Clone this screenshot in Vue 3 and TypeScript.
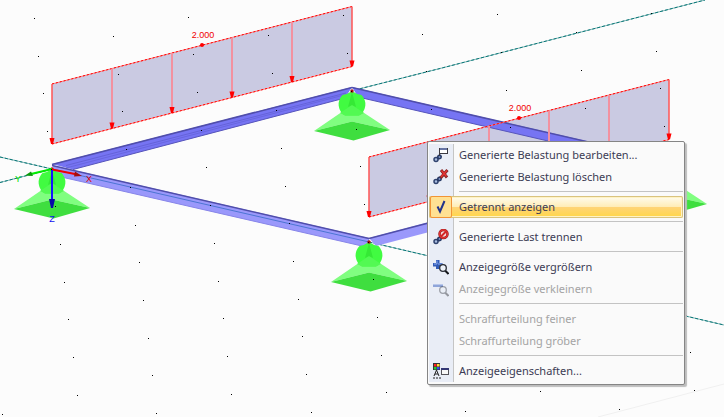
<script setup lang="ts">
import { ref } from 'vue'

type IconName = 'edit' | 'remove' | 'check' | 'split' | 'enlarge' | 'reduce' | 'display'

interface Entry {
  label: string
  icon?: IconName
  disabled?: boolean
  toggle?: boolean
}

interface Point {
  x: number
  y: number
}

const groups: Entry[][] = [
  [
    { label: 'Generierte Belastung bearbeiten...', icon: 'edit' },
    { label: 'Generierte Belastung löschen', icon: 'remove' },
  ],
  [{ label: 'Getrennt anzeigen', icon: 'check', toggle: true }],
  [{ label: 'Generierte Last trennen', icon: 'split' }],
  [
    { label: 'Anzeigegröße vergrößern', icon: 'enlarge' },
    { label: 'Anzeigegröße verkleinern', icon: 'reduce', disabled: true },
  ],
  [
    { label: 'Schraffurteilung feiner', disabled: true },
    { label: 'Schraffurteilung gröber', disabled: true },
  ],
  [{ label: 'Anzeigeeigenschaften...', icon: 'display' }],
]

const separate = ref(true)

function choose(entry: Entry): void {
  if (entry.toggle) separate.value = !separate.value
}

// Work plane grid, projected with two direction vectors
const gridDots: Point[] = []
for (let i = -3; i <= 10; i++) {
  for (let j = -7; j <= 12; j++) {
    const x = Math.floor(34.4 + i * 79.35 + j * 4.3)
    const y = Math.floor(18.3 + i * 18.25 + j * 37.7)
    if (x >= 0 && x < 724 && y >= 0 && y < 417) gridDots.push({ x, y })
  }
}

// Nodes of the frame that carry a support
const supports: Point[] = [
  { x: 352, y: 91 },
  { x: 52, y: 169 },
  { x: 669, y: 165 },
  { x: 369, y: 242 },
]

// Line loads: start of the upper edge, each 300 wide and rising by 77
const loads: Point[] = [
  { x: 52, y: 84 },
  { x: 369, y: 157 },
]
const arrows: Point[] = [0, 1, 2, 3, 4, 5].map((n) => ({ x: n * 60, y: -15.5 * n }))
</script>

<template>
  <main class="workspace">
    <svg class="scene" viewBox="0 0 724 417" preserveAspectRatio="xMinYMin slice">
      <path d="M598 417 724 384" stroke="#f0f0f0" />
      <g class="guides">
        <path d="M0 157 52 169M0 182.500 52 169M355 90 440 68.500 705 0M369 242 724 325" />
        <path class="guide-dash" d="M0 157 52 169M0 182.500 52 169M355 90 440 68.500 705 0M369 242 724 325" />
      </g>

      <g v-for="load in loads" :key="load.x" :transform="`translate(${load.x} ${load.y})`">
        <path d="M0 0 300-77.500V-18L0 60Z" fill="#cacae2" />
      </g>

      <g class="beams">
        <path d="M52 164 352 87 345 98 73 169.500Z" fill="#7674f3" />
        <path d="M66 168 344 95" stroke="#6967df" fill="none" />
        <path d="M66 165.500 346 93" stroke="#6563d8" fill="none" />
        <path class="rim" d="M52 164.500 352 87.500" />
        <path d="M73 169.500 345 98" stroke="#5755bb" />
        <path d="M352 87 669 160V169L358 97Z" fill="#7674f3" />
        <path class="rim" d="M352 87.500 669 160.500" />
        <path d="M358 97 669 169" stroke="#5755bb" />
        <path d="M52 165 369 238V246L362 246 57 176Z" fill="#9a98fb" />
        <path class="rim" d="M52 165.500 369 238.500" />
        <path d="M57 176 362 246" stroke="#8785e8" />
        <path d="M52 169 369 242" stroke="#4b75d2" />
        <path d="M369 238 669 159V169L376 246Z" fill="#9a98fb" />
        <path class="rim" d="M369 238.500 669 160" />
      </g>

      <g v-for="node in supports" :key="`${node.x}-${node.y}`" :transform="`translate(${node.x} ${node.y})`">
        <path d="M0 14-38 40 0 30.500 38 39Z" fill="#80fe80" />
        <path d="M-38 40 0 30.500 38 39 1.500 49.500Z" fill="#3fde3f" />
        <path d="M-7 24.500A13 13 0 0 1-9.500 4Q-4 3 0 0Q4 3 9.500 4A13 13 0 0 1 7 24.500Z" fill="#41fb41" />
        <path d="M0 14-12 22-7 24.500H7L12 22Z" fill="#53f953" />
        <path d="M0 1-4 16 0 14 4 16Z" fill="#35e935" />
        <circle r="1.700" fill="#a80c0c" />
      </g>

      <g class="loads">
        <g v-for="load in loads" :key="load.x" :transform="`translate(${load.x} ${load.y})`">
          <path d="M0 0 300-77.500M0 60 300-17.500" stroke="#ff7777" />
          <path d="M0 0 300-77.500M0 60 300-17.500" stroke="#f00" stroke-dasharray="2 2" />
          <g v-for="(arrow, n) in arrows" :key="n" :transform="`translate(${arrow.x} ${arrow.y})`">
            <path :class="n === 0 || n === 5 ? 'edge' : 'shaft'" d="M0 0V56" />
            <path d="M-2.500 54H2.500L1 60H-1Z" fill="#f00" />
          </g>
          <circle cx="150" cy="-39" r="2" fill="#f00" />
          <text class="value" x="151" y="-46" text-anchor="middle">2.000</text>
        </g>
      </g>

      <g class="axes">
        <path d="M52 169 31 174" stroke="#00ee00" stroke-width="2" />
        <path d="M25 175.500 31 171.500 33 176Z" fill="#0a9c0a" />
        <path d="M52 169.500 75 174" stroke="#f00000" stroke-width="2" />
        <path d="M82 176 75 171.500 74 176.500Z" fill="#a50d0d" />
        <path d="M52 170V200" stroke="#1414ff" stroke-width="2" />
        <path d="M49 199H55L53 208H51Z" fill="#0707a8" />
        <text x="18" y="182" fill="#00e000">Y</text>
        <text x="89" y="182" fill="#e00000">X</text>
        <text x="52" y="222" fill="#1010f0">Z</text>
      </g>

      <g shape-rendering="crispEdges">
        <rect v-for="dot in gridDots" :key="`${dot.x}-${dot.y}`" :x="dot.x" :y="dot.y" width="1" height="1" />
      </g>
    </svg>

    <div class="menu" role="menu">
      <div v-for="(group, g) in groups" :key="g" class="group" role="group">
        <button
          v-for="entry in group"
          :key="entry.label"
          type="button"
          class="entry"
          :class="{ active: entry.toggle }"
          :role="entry.toggle ? 'menuitemcheckbox' : 'menuitem'"
          :aria-checked="entry.toggle ? separate : undefined"
          :disabled="entry.disabled"
          @click="choose(entry)"
        >
          <span class="slot">
            <svg v-if="entry.icon" class="icon" viewBox="0 0 16 16" aria-hidden="true">
              <g v-if="entry.icon === 'edit' || entry.icon === 'remove' || entry.icon === 'split'">
                <path d="M3 12.500 8 8.500" stroke="#26365f" stroke-width="3" />
                <circle cx="3" cy="12.500" r="2" fill="#a9bce0" stroke="#30436f" stroke-width="1.500" />
                <circle cx="6.500" cy="10" r="1.700" fill="#7c93c5" stroke="#263966" stroke-width="1.500" />
              </g>
              <g v-if="entry.icon === 'edit'">
                <path d="M6.500 9V4" stroke="#35343b" />
                <rect x="6.500" y="1.500" width="8" height="5" fill="#fff" stroke="#3c3a42" />
                <path d="M7 2H14" stroke="#6775a5" stroke-width="2" />
              </g>
              <g v-else-if="entry.icon === 'remove'">
                <path d="M8 1 14 8.500M14.500 1 7.500 9" stroke="#842626" stroke-width="3" />
                <path d="M8.500 1.500 13.500 7.500M14 1.500 8 8" stroke="#e53434" stroke-width="1.500" />
              </g>
              <g v-else-if="entry.icon === 'check'">
                <path v-if="separate" d="M4.500 7.500 7 12.500 11.500 2" fill="none" stroke="#23348b" stroke-width="2" />
              </g>
              <g v-else-if="entry.icon === 'split'">
                <circle cx="10.500" cy="5" r="4" fill="#f7dddd" stroke="#9b1d1d" stroke-width="2.500" />
                <circle cx="10.500" cy="5" r="4" fill="none" stroke="#e33333" stroke-width="1.500" />
                <path d="M8 7.500 13 2.500" stroke="#d52525" stroke-width="2" />
              </g>
              <g v-else-if="entry.icon === 'enlarge' || entry.icon === 'reduce'">
                <g v-if="entry.icon === 'enlarge'">
                  <path d="M3 1H6.500V4H9.500V7.500H6.500V10H3V7.500H0V4H3Z" fill="#315bb6" />
                  <path d="M4 1.500V5H1M5 5H9" fill="none" stroke="#8eabed" />
                </g>
                <g v-else>
                  <rect x="0" y="3" width="10" height="3" fill="#8fa5d9" />
                  <path d="M0 3.500H10" stroke="#b9c8eb" />
                </g>
                <g :class="{ pale: entry.icon === 'reduce' }">
                  <path d="M12 11.500 15.500 15" stroke="#16181c" stroke-width="2" />
                  <circle cx="10" cy="9" r="3.300" fill="#edf2f9" stroke="#292d35" stroke-width="1.300" />
                </g>
              </g>
              <g v-else-if="entry.icon === 'display'">
                <rect x="0" y="0" width="7" height="7" fill="#333" />
                <rect x="1" y="1" width="2.500" height="2.500" fill="#f22" />
                <rect x="4" y="1" width="2.500" height="2.500" fill="#fd3" />
                <rect x="1" y="4" width="2.500" height="2.500" fill="#2c3" />
                <rect x="4" y="4" width="2.500" height="2.500" fill="#34e" />
                <path d="M1 13 3.500 7 6 13M2 11H5M0 15H2M3 15H5M6 15H8" fill="none" stroke="#222" />
                <rect x="8.500" y="5.500" width="7" height="6" fill="#f8f8f8" stroke="#55545a" />
                <path d="M8 6H16" stroke="#343875" stroke-width="2" />
              </g>
            </svg>
          </span>
          <span class="caption">{{ entry.label }}</span>
        </button>
      </div>
    </div>
  </main>
</template>

<style>
body {
  margin: 0;
  background: #fcfcfc;
}
</style>

<style scoped>
.workspace {
  position: relative;
  min-height: 100vh;
  overflow: hidden;
  background: #fcfcfc;
  font-family: "Noto Sans", "Open Sans", sans-serif;
}

.scene {
  display: block;
  width: 100%;
  height: 100vh;
}

.guides path {
  fill: none;
  stroke: #7fb5b5;
}

.guides .guide-dash {
  stroke: #087777;
  stroke-dasharray: 3 2;
}

.rim {
  stroke: #504eaa;
  stroke-width: 1.5;
}

.edge {
  stroke: #ff5555;
  stroke-width: 1.5;
}

.shaft {
  stroke: #f391a0;
  stroke-width: 2;
}

.value {
  fill: #f00000;
  font: 9px "Liberation Sans", sans-serif;
}

.axes text {
  font: 9px "Liberation Sans", sans-serif;
  text-anchor: middle;
}

.menu {
  position: absolute;
  top: 141px;
  left: 427px;
  box-sizing: border-box;
  min-width: 258px;
  padding: 2px 1px;
  border: 1px solid #858585;
  border-radius: 2px;
  background: linear-gradient(#e9edf6, #e9edf6) 1px 2px / 24px calc(100% - 4px) no-repeat, #fafafa;
  box-shadow: 2px 2px 1px #bdbdbd;
}

.group + .group {
  position: relative;
  padding-top: 8px;
}

.group + .group::before {
  position: absolute;
  top: 3px;
  right: 0;
  left: 30px;
  height: 1px;
  background: #c3c3c3;
  content: "";
}

.group::after {
  position: absolute;
  top: 0;
  left: 24px;
  width: 1px;
  height: 8px;
  background: #c5c5c5;
}

.group + .group::after {
  content: "";
}

.entry {
  display: flex;
  box-sizing: border-box;
  width: 100%;
  height: 22px;
  padding: 0;
  border: 0;
  background: none;
  color: #3c3c54;
  font: inherit;
  font-size: 11px;
  line-height: 22px;
  text-align: left;
}

.entry:disabled {
  color: #a4a4a4;
}

.slot {
  display: flex;
  flex: none;
  align-items: center;
  justify-content: center;
  box-sizing: border-box;
  width: 25px;
  border-right: 1px solid #c5c5c5;
}

.icon {
  width: 16px;
  height: 16px;
}

.caption {
  padding: 0 8px 0 5px;
  white-space: nowrap;
}

.active {
  border-radius: 2px;
  background: linear-gradient(#fffdf2, #ffedb8 48%, #ffd476 52%, #ffd64f 90%, #ffeaa0);
  box-shadow: inset 0 0 0 1px #d9c37f, inset 0 0 0 2px #fff3c4;
}

.active .slot {
  width: 22px;
  margin: 0 2px 0 1px;
  border: 1px solid #f29436;
  border-radius: 2px;
  background: #ffe193;
}

.pale {
  opacity: 0.4;
}
</style>
